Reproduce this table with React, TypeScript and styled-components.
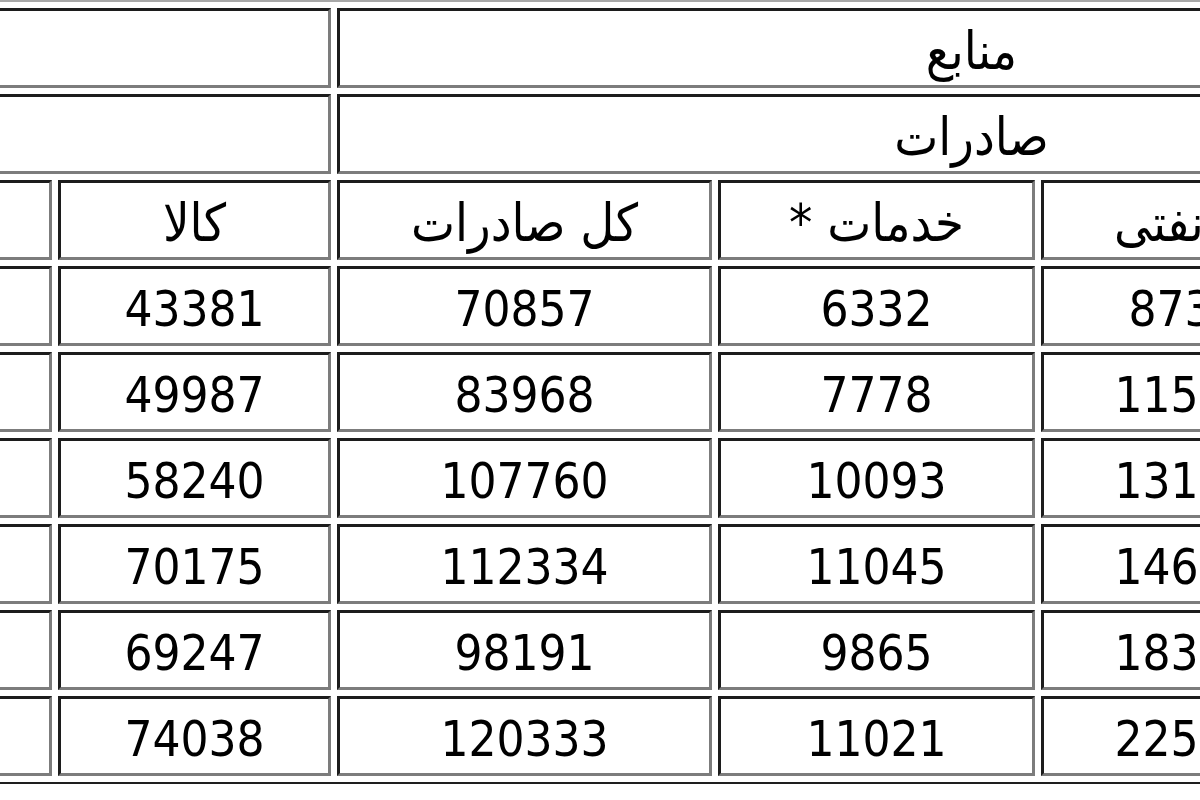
import styled, { createGlobalStyle } from 'styled-components';

const GlobalStyle = createGlobalStyle`
    html, body {
        margin: 0;
        padding: 0;
        background: #ffffff;
    }
`;

// columns from right to left: F, E, D, C, B, A
const columnWidths = [244, 315, 317, 375, 273, 273];

const header = ['نفتی', 'غیر نفتی', 'خدمات *', 'کل صادرات', 'کالا', 'واردات'];

const rows = [
    ['21144', '87346', '6332', '70857', '43381', '51002'],
    ['26200', '115190', '7778', '83968', '49987', '62405'],
    ['38617', '131429', '10093', '107760', '58240', '71284'],
    ['35617', '146714', '11045', '112334', '70175', '83915'],
    ['22170', '183385', '9865', '98191', '69247', '79032'],
    ['33290', '225317', '11021', '120333', '74038', '88471'],
];

export default function App() {
    return (
        <Viewport>
            <GlobalStyle />
            <Sheet $columns={columnWidths}>
                <Cell $span={4}>منابع</Cell>
                <Cell $span={2} />
                <Cell $span={4}>صادرات</Cell>
                <Cell $span={2} />
                {header.map((title) => (
                    <Cell key={title}>{title}</Cell>
                ))}
                {rows.map((row, i) =>
                    row.map((value, j) => (
                        <Cell key={`${i}-${j}`} $numeric>
                            {value}
                        </Cell>
                    ))
                )}
            </Sheet>
        </Viewport>
    );
}

const Viewport = styled.div`
    width: 1200px;
    height: 800px;
    overflow: hidden;
    background: #ffffff;
`;

const Sheet = styled.div<{ $columns: number[] }>`
    direction: rtl;
    display: grid;
    grid-template-columns: ${({ $columns }) => $columns.map((w) => `${w}px`).join(' ')};
    grid-auto-rows: 80px;
    gap: 6px;
    padding: 6px;
    width: max-content;
    margin-left: -229px;
    border-style: solid;
    border-width: 2px;
    border-color: #a8a8a8 #1e1e1e #1e1e1e #a8a8a8;
    background: #ffffff;
`;

const Cell = styled.div<{ $span?: number; $numeric?: boolean }>`
    grid-column: span ${({ $span }) => $span ?? 1};
    box-sizing: border-box;
    display: flex;
    align-items: center;
    justify-content: center;
    padding-top: ${({ $numeric }) => ($numeric ? '7px' : '6px')};
    border-style: solid;
    border-width: 3px;
    border-color: #1c1c1c #7c7c7c #7c7c7c #1c1c1c;
    font-family: 'DejaVu Sans Condensed', 'DejaVu Sans', sans-serif;
    font-stretch: condensed;
    font-size: ${({ $numeric }) => ($numeric ? '49px' : '52px')};
    color: #000000;
    white-space: nowrap;
    overflow: hidden;
`;
